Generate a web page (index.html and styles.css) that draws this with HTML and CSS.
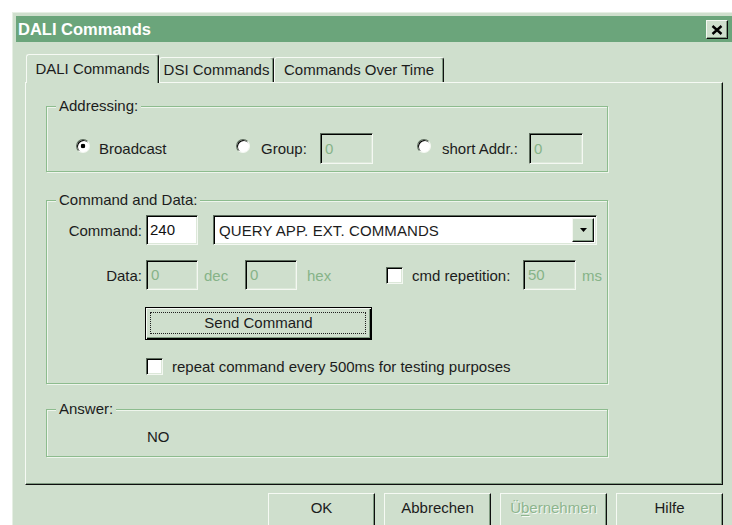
FILE: index.html
```html
<!DOCTYPE html>
<html lang="de">
<head>
<meta charset="utf-8">
<title>DALI Commands</title>
<link rel="stylesheet" href="styles.css">
</head>
<body>
<div class="window">
  <div class="titlebar">
    <span class="title">DALI Commands</span>
    <span class="close">
      <svg width="12" height="10" viewBox="0 0 12 10"><path d="M1.5 1 L10.5 9 M10.5 1 L1.5 9" stroke="#000" stroke-width="2.4" fill="none"/></svg>
    </span>
  </div>
  <div class="client">
    <div class="tabs">
      <div class="tab tab-dali active">DALI Commands</div>
      <div class="tab tab-dsi">DSI Commands</div>
      <div class="tab tab-time">Commands Over Time</div>
    </div>
    <div class="panel">
      <div class="group group-addr">
        <span class="group-title">Addressing:</span>
        <div class="addr-row">
          <div class="opt opt-broadcast"><span class="radio checked"></span><span class="opt-text">Broadcast</span></div>
          <div class="opt opt-group"><span class="radio"></span><span class="opt-text">Group:</span><span class="field disabled">0</span></div>
          <div class="opt opt-short"><span class="radio"></span><span class="opt-text">short Addr.:</span><span class="field disabled">0</span></div>
        </div>
      </div>

      <div class="group group-cmd">
        <span class="group-title">Command and Data:</span>
        <div class="cmd-row">
          <span class="row-label">Command:</span>
          <span class="field field-cmd">240</span>
          <div class="select">
            <span class="select-text">QUERY APP. EXT. COMMANDS</span>
            <span class="drop-btn"><svg width="7" height="4" viewBox="0 0 7 4"><path d="M0 0 H7 L3.5 4 Z" fill="#000"/></svg></span>
          </div>
        </div>
        <div class="data-row">
          <span class="row-label">Data:</span>
          <span class="field field-cmd disabled">0</span>
          <span class="unit unit-dec">dec</span>
          <span class="field field-hex disabled">0</span>
          <span class="unit unit-hex">hex</span>
          <span class="check check-rep"></span>
          <span class="rep-label">cmd repetition:</span>
          <span class="field disabled">50</span>
          <span class="unit unit-ms">ms</span>
        </div>
        <div class="send-row">
          <span class="send-btn">Send Command</span>
        </div>
        <div class="repeat-row">
          <span class="check"></span>
          <span class="repeat-label">repeat command every 500ms for testing purposes</span>
        </div>
      </div>

      <div class="group group-answer">
        <span class="group-title">Answer:</span>
        <div class="answer">NO</div>
      </div>
    </div>

    <div class="buttons">
      <span class="btn">OK</span>
      <span class="btn">Abbrechen</span>
      <span class="btn disabled">Ü<u>b</u>ernehmen</span>
      <span class="btn">Hilfe</span>
    </div>
  </div>
</div>
</body>
</html>
```

FILE: styles.css
```css
* {
  box-sizing: border-box;
}

html,
body {
  margin: 0;
  height: 100%;
  overflow: hidden;
  background: #ffffff;
}

body {
  font-family: "Liberation Sans", Arial, sans-serif;
  font-size: 15px;
  color: #1c1c1c;
}

/* dialog frame, cut off by the bottom of the view */
.window {
  margin: 12px 0 0 12px;
  width: 720px;
  height: 513px;
  overflow: hidden;
  background: #cfdfcd;
  border-top: 1px solid #e6efe4;
  border-left: 1px solid #e6efe4;
  padding: 3px 0 0 3px;
}

.titlebar {
  height: 26px;
  background: #6ba57b;
  display: flex;
  align-items: flex-start;
  justify-content: space-between;
  padding-left: 2px;
}

.title {
  color: #ffffff;
  font-weight: bold;
  font-size: 16.5px;
  line-height: 26px;
}

.close {
  margin: 4px 4px 0 0;
  width: 22px;
  height: 19px;
  background: #cfdfcd;
  border: 1px solid;
  border-color: #f4f8f2 #0c0c0c #0c0c0c #f4f8f2;
  box-shadow: inset -1px -1px 0 #7f9a80;
  display: flex;
  align-items: center;
  justify-content: center;
}

.client {
  padding: 12px 0 0 9px;
}

/* tab strip */
.tabs {
  display: flex;
  align-items: flex-end;
  height: 28px;
  margin-left: 1px;
  position: relative;
  z-index: 1;
}

.tab {
  height: 25px;
  border-top: 1px solid #f6faf4;
  border-left: 1px solid #f6faf4;
  border-right: 1px solid #111111;
  border-radius: 3px 3px 0 0;
  box-shadow: inset -1px 0 0 #7f9a80;
  text-align: center;
  line-height: 23px;
  white-space: nowrap;
}

.tab.active {
  height: 29px;
  margin-bottom: -1px;
  background: #cfdfcd;
  line-height: 27px;
}

.tab-dali { width: 133px; }
.tab-dsi { width: 115px; }
.tab-time { width: 170px; }

.panel {
  width: 698px;
  height: 403px;
  border: 1px solid;
  border-color: #f6faf4 #0e0e0e #0e0e0e #f6faf4;
  box-shadow: inset -1px -1px 0 #7f9a80;
  padding: 23px 0 0 20px;
  display: flex;
  flex-direction: column;
}

/* etched group boxes */
.group {
  position: relative;
  width: 562px;
  border: 1px solid #8dbc8e;
  box-shadow: 1px 1px 0 #eef5ec, inset 1px 1px 0 #eef5ec;
}

.group-title {
  position: absolute;
  top: -10px;
  left: 9px;
  padding: 0 3px;
  background: #cfdfcd;
  line-height: 18px;
  white-space: nowrap;
}

.group-addr {
  height: 66px;
  padding-top: 26px;
}

.group-cmd {
  margin-top: 28px;
  height: 184px;
  padding-top: 14px;
}

.group-answer {
  margin-top: 25px;
  height: 48px;
  padding: 18px 0 0 100px;
}

.answer {
  line-height: 18px;
}

/* sunken controls */
.field {
  display: inline-block;
  width: 53px;
  height: 31px;
  border: 1px solid;
  border-color: #5c6b5c #f4f8f2 #f4f8f2 #5c6b5c;
  box-shadow: inset 1px 1px 0 #000000, inset -1px -1px 0 #dce8d9;
  padding: 0 0 0 4px;
  line-height: 29px;
  background: #ffffff;
  flex: none;
}

.field.disabled {
  background: #cfdfcd;
  color: #86b388;
}

.radio {
  width: 14px;
  height: 14px;
  border-radius: 50%;
  background: #ffffff;
  border: 1px solid;
  border-color: #5c6b5c #f4f8f2 #f4f8f2 #5c6b5c;
  box-shadow: inset 1px 1px 0 #000000;
  margin-bottom: 6px;
  flex: none;
}

.radio.checked {
  background: radial-gradient(circle at 50% 50%, #000000 0, #000000 2px, #ffffff 2.6px);
}

.check {
  display: inline-block;
  width: 17px;
  height: 17px;
  background: #ffffff;
  border: 1px solid;
  border-color: #5c6b5c #f4f8f2 #f4f8f2 #5c6b5c;
  box-shadow: inset 1px 1px 0 #000000, inset -1px -1px 0 #dce8d9;
  flex: none;
}

/* addressing row */
.addr-row {
  display: flex;
  align-items: center;
  height: 31px;
  padding-left: 29px;
}

.opt {
  display: flex;
  align-items: center;
  flex: none;
}

.opt-text {
  margin-left: 10px;
  white-space: nowrap;
}

.opt-broadcast { width: 160px; }
.opt-broadcast .opt-text { margin-left: 9px; }
.opt-group { width: 181px; }
.opt-group .opt-text { width: 48px; margin-left: 11px; }
.opt-group .field { margin-left: 11px; }
.opt-short .opt-text { width: 79px; margin-left: 11px; }
.opt-short .field { margin-left: 8px; width: 54px; }

/* command and data rows */
.cmd-row,
.data-row {
  display: flex;
  align-items: center;
  height: 30px;
}

.data-row {
  margin-top: 15px;
}

.row-label {
  width: 95px;
  text-align: right;
  flex: none;
}

.field-cmd {
  width: 52px;
  height: 30px;
  margin-left: 4px;
  line-height: 28px;
}

.cmd-row .field-cmd {
  color: #111111;
  padding-left: 3px;
}

.field-hex {
  width: 52px;
  height: 30px;
  line-height: 28px;
}

.data-row .field {
  height: 30px;
  line-height: 28px;
}

.unit {
  color: #86b388;
  flex: none;
}

.unit-dec { margin-left: 6px; width: 41px; }
.unit-hex { margin-left: 10px; width: 79px; }
.unit-ms { margin-left: 6px; }

.rep-label {
  width: 120px;
  padding-left: 9px;
  white-space: nowrap;
  flex: none;
}

.select {
  margin-left: 15px;
  width: 384px;
  height: 30px;
  background: #ffffff;
  border: 1px solid;
  border-color: #5c6b5c #f4f8f2 #f4f8f2 #5c6b5c;
  box-shadow: inset 1px 1px 0 #000000, inset -1px -1px 0 #dce8d9;
  display: flex;
  align-items: center;
  justify-content: space-between;
  padding: 2px 2px 2px 5px;
}

.select-text {
  white-space: nowrap;
  letter-spacing: 0.1px;
}

.drop-btn {
  width: 22px;
  height: 24px;
  background: #cfdfcd;
  border: 1px solid;
  border-color: #f4f8f2 #0c0c0c #0c0c0c #f4f8f2;
  box-shadow: inset -1px -1px 0 #7f9a80;
  display: flex;
  align-items: center;
  justify-content: center;
}

.send-row {
  margin-top: 17px;
  padding-left: 98px;
}

.send-btn {
  position: relative;
  display: block;
  width: 227px;
  height: 33px;
  border: 1px solid #000000;
  box-shadow: inset 1px 1px 0 #f6faf4, inset -1px -1px 0 #000000, inset -2px -2px 0 #7f9a80;
  text-align: center;
  line-height: 30px;
}

/* keyboard focus rectangle */
.send-btn::after {
  content: "";
  position: absolute;
  top: 4px;
  left: 4px;
  right: 5px;
  bottom: 5px;
  border: 1px dotted #202020;
}

.repeat-row {
  display: flex;
  align-items: center;
  margin-top: 18px;
  padding-left: 99px;
}

.repeat-label {
  margin-left: 9px;
  white-space: nowrap;
}

/* dialog buttons */
.buttons {
  width: 698px;
  display: flex;
  justify-content: flex-end;
  gap: 9px;
  margin-top: 8px;
}

.btn {
  width: 107px;
  height: 34px;
  border: 1px solid;
  border-color: #f6faf4 #0e0e0e #0e0e0e #f6faf4;
  box-shadow: inset -1px -1px 0 #7f9a80;
  text-align: center;
  line-height: 28px;
  flex: none;
}

.btn.disabled {
  color: #8db58e;
  text-shadow: 1px 1px 0 #f4f8f2;
}

.btn u {
  text-decoration-thickness: 1px;
  text-underline-offset: 2px;
}
```
